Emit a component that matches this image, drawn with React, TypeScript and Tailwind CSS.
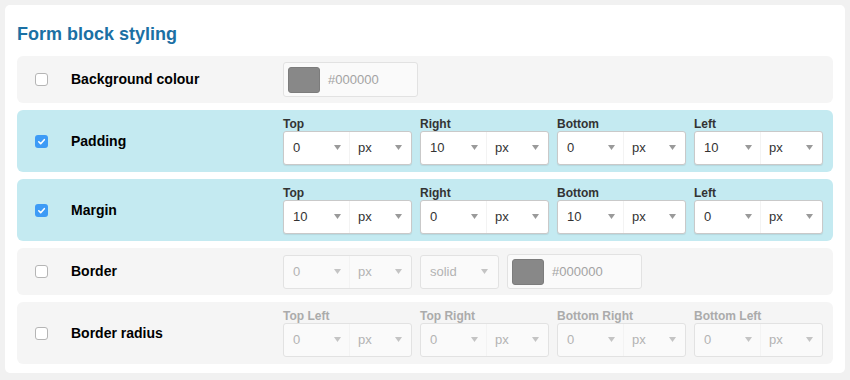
import React from 'react';

type Side = { label: string; value: string };

const Arrow = ({ disabled }: { disabled?: boolean }) => (
  <svg width="7" height="5" viewBox="0 0 7 5" aria-hidden="true">
    <path d="M0 0h7L3.5 5z" fill={disabled ? '#c4c4c4' : '#9a9a9a'} />
  </svg>
);

const Checkbox = ({ checked }: { checked: boolean }) =>
  checked ? (
    <span className="flex h-[13px] w-[13px] items-center justify-center rounded-[3px] bg-[#3d9bf6]">
      <svg width="9" height="9" viewBox="0 0 9 9" aria-hidden="true">
        <path d="M1.8 4.8l1.9 1.9 3.6-4" fill="none" stroke="#fff" strokeWidth="1.6" strokeLinecap="round" strokeLinejoin="round" />
      </svg>
    </span>
  ) : (
    <span className="block h-[13px] w-[13px] rounded-[3px] border border-[#b5b5b5] bg-white" />
  );

const UnitSelect = ({ value, disabled }: { value: string; disabled?: boolean }) => (
  <div
    className={`flex h-[34px] w-[129px] rounded-[3px] border text-[13px] ${
      disabled
        ? 'border-[#e2e2e2] bg-[#fafafa] text-[#b3b3b3]'
        : 'border-[#c9c9c9] bg-white text-[#333] shadow-[0_1px_1px_rgba(0,0,0,0.08)]'
    }`}
  >
    <div className="flex w-[65px] items-center justify-between pl-[9px] pr-[8px]">
      <span>{value}</span>
      <Arrow disabled={disabled} />
    </div>
    <div className="flex flex-1 items-center justify-between border-l border-[#f3f3f3] pl-[8px] pr-[9px]">
      <span>px</span>
      <Arrow disabled={disabled} />
    </div>
  </div>
);

const ColourInput = ({ width }: { width: string }) => (
  <div className={`flex h-[35px] ${width} items-center rounded-[3px] border border-[#e2e2e2] bg-[#fafafa] pl-[4px]`}>
    <span className="h-[26px] w-[32px] rounded-[3px] border border-[#7c7c7c] bg-[#888888]" />
    <span className="ml-[8px] text-[13px] text-[#a3a3a3]">#000000</span>
  </div>
);

const SideGroup = ({ sides, disabled }: { sides: Side[]; disabled?: boolean }) => (
  <div className="flex gap-[8px]">
    {sides.map((s) => (
      <div key={s.label} className="flex flex-col">
        <span className={`h-[14px] text-[12px] font-bold leading-[14px] ${disabled ? 'text-[#ababab]' : 'text-[#333]'}`}>
          {s.label}
        </span>
        <UnitSelect value={s.value} disabled={disabled} />
      </div>
    ))}
  </div>
);

const Row = ({
  checked,
  label,
  tall,
  children,
}: {
  checked: boolean;
  label: string;
  tall?: boolean;
  children: React.ReactNode;
}) => (
  <div
    className={`flex items-center rounded-[6px] ${tall ? 'h-[62px]' : 'h-[47px]'} ${
      checked ? 'bg-[#c4eaf1]' : 'bg-[#f5f5f5]'
    }`}
  >
    <div className="flex w-[54px] pl-[18px]">
      <Checkbox checked={checked} />
    </div>
    <div className="w-[212px] text-[14px] font-bold text-black">{label}</div>
    <div className="flex items-center gap-[8px]">{children}</div>
  </div>
);

export default function App() {
  return (
    <div className="h-[380px] w-[850px] bg-[#f1f1f1] p-[5px]" style={{ fontFamily: '"Liberation Sans", Arial, sans-serif' }}>
      <div className="h-[368px] w-[840px] rounded-[5px] bg-white px-[12px] pt-[19px]">
        <h2 className="mb-[12px] text-[18px] font-bold leading-[20px] text-[#1b70a4]">Form block styling</h2>
        <div className="flex flex-col gap-[7px]">
          <Row checked={false} label="Background colour">
            <ColourInput width="w-[135px]" />
          </Row>
          <Row checked label="Padding" tall>
            <div className="pb-[1px]">
              <SideGroup
                sides={[
                  { label: 'Top', value: '0' },
                  { label: 'Right', value: '10' },
                  { label: 'Bottom', value: '0' },
                  { label: 'Left', value: '10' },
                ]}
              />
            </div>
          </Row>
          <Row checked label="Margin" tall>
            <div className="pb-[1px]">
              <SideGroup
                sides={[
                  { label: 'Top', value: '10' },
                  { label: 'Right', value: '0' },
                  { label: 'Bottom', value: '10' },
                  { label: 'Left', value: '0' },
                ]}
              />
            </div>
          </Row>
          <Row checked={false} label="Border">
            <UnitSelect value="0" disabled />
            <div className="flex h-[34px] w-[79px] items-center justify-between rounded-[3px] border border-[#e2e2e2] bg-[#fafafa] pl-[9px] pr-[10px] text-[13px] text-[#b3b3b3]">
              <span>solid</span>
              <Arrow disabled />
            </div>
            <ColourInput width="w-[135px]" />
          </Row>
          <Row checked={false} label="Border radius" tall>
            <div className="pb-[1px]">
              <SideGroup
                disabled
                sides={[
                  { label: 'Top Left', value: '0' },
                  { label: 'Top Right', value: '0' },
                  { label: 'Bottom Right', value: '0' },
                  { label: 'Bottom Left', value: '0' },
                ]}
              />
            </div>
          </Row>
        </div>
      </div>
    </div>
  );
}
